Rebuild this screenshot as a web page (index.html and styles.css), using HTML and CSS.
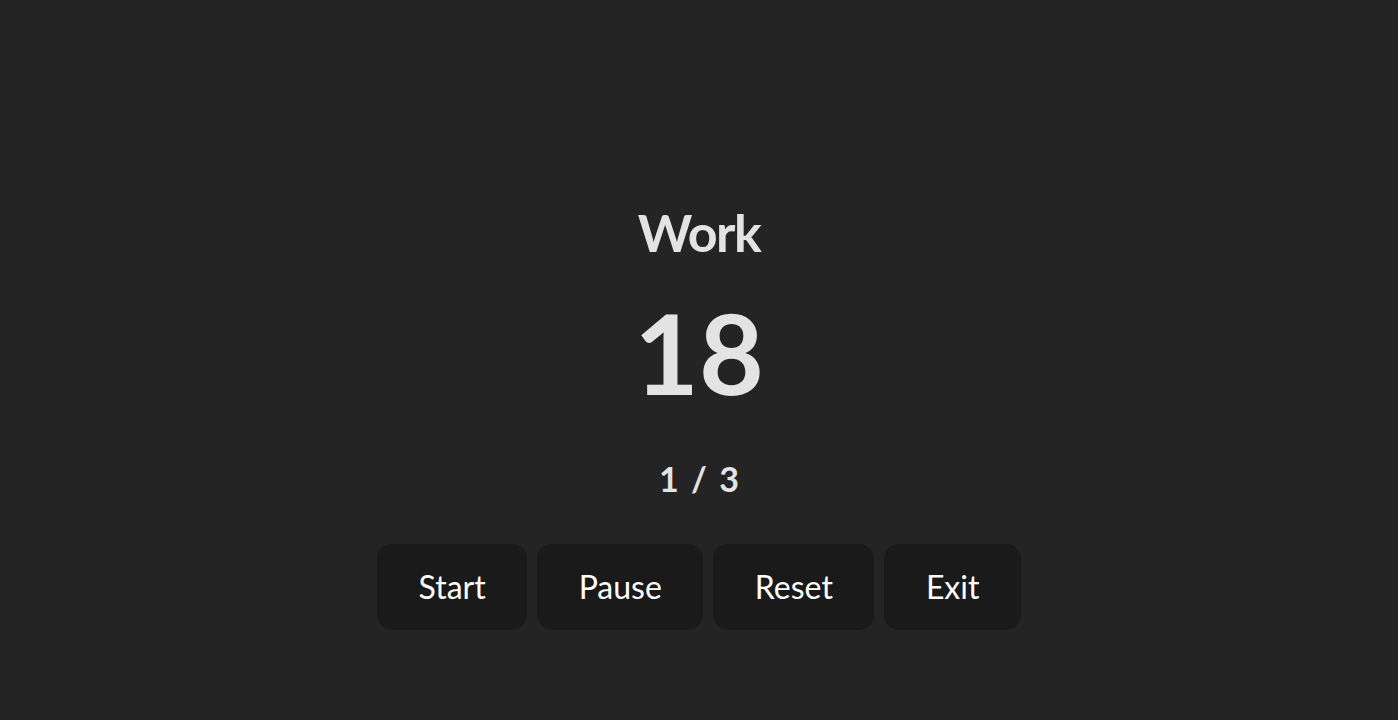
FILE: index.html
```html
<!DOCTYPE html>
<html lang="en">
<head>
<meta charset="utf-8">
<title>Timer</title>
<link rel="stylesheet" href="styles.css">
</head>
<body>
<main class="timer">
  <h1 class="phase">Work</h1>
  <div class="count">18</div>
  <div class="round">1 / 3</div>
  <div class="controls">
    <button class="btn">Start</button>
    <button class="btn">Pause</button>
    <button class="btn">Reset</button>
    <button class="btn">Exit</button>
  </div>
</main>
</body>
</html>
```
FILE: styles.css
```css
html, body {
  margin: 0;
  padding: 0;
  background: #242424;
}
body {
  font-family: Lato, "Noto Sans", sans-serif;
  color: #e3e3e3;
  min-height: 720px;
}
.timer {
  display: flex;
  flex-direction: column;
  align-items: center;
  padding-top: 206px;
}
.phase {
  margin: 0;
  font-size: 52px;
  line-height: 1;
  font-weight: 700;
  letter-spacing: -1.5px;
}
.count {
  margin-top: 38px;
  font-size: 112px;
  line-height: 1;
  font-weight: 700;
}
.round {
  margin-top: 54px;
  font-size: 34px;
  line-height: 1;
  font-weight: 700;
  word-spacing: 4px;
}
.controls {
  margin-top: 48px;
  display: flex;
  gap: 10px;
}
.btn {
  font-family: inherit;
  font-size: 32px;
  line-height: 1;
  color: #ffffff;
  background: #1a1a1a;
  border: none;
  border-radius: 15px;
  padding: 27px 41.5px;
  cursor: pointer;
}
```
